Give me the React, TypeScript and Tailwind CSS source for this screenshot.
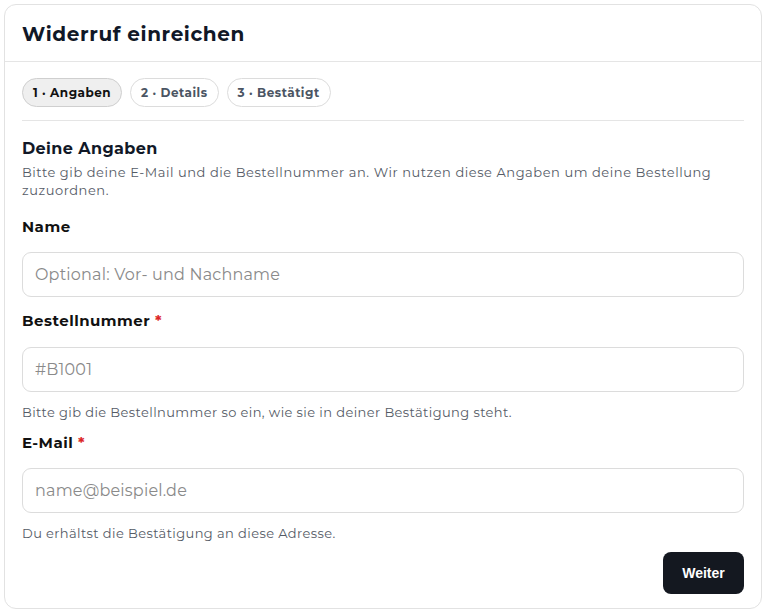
export default function App() {
  const font = { fontFamily: "Montserrat, 'Noto Sans', sans-serif" };
  const input = "w-full h-[45px] rounded-[9px] border border-[#dcdcdc] px-3 text-[16px] text-[#111] placeholder:text-[#8a8a8a] outline-none bg-white tracking-[0.2px]";
  return (
    <div className="w-[765px] h-[613px] bg-white p-[4px]" style={font}>
      <div className="h-[605px] w-[758px] rounded-[12px] border border-[#e2e2e2] flex flex-col">
        <div className="h-[57px] border-b border-[#e5e5e5] flex items-center px-[17px] pt-[2px]">
          <h1 className="text-[20px] font-bold text-[#111827] tracking-[0.6px]">Widerruf einreichen</h1>
        </div>
        <div className="px-[17px] flex flex-col">
          <div className="flex gap-[8px] pt-[16px] pb-[13px] border-b border-[#e5e5e5]">
            <span className="h-[29px] px-[10px] rounded-full border border-[#cfcfcf] bg-[#efefef] text-[12px] font-bold text-[#111] flex items-center tracking-[0.5px]">1 · Angaben</span>
            <span className="h-[29px] px-[10px] rounded-full border border-[#dcdcdc] text-[12px] font-bold text-[#4b5563] flex items-center tracking-[0.5px]">2 · Details</span>
            <span className="h-[29px] px-[10px] rounded-full border border-[#dcdcdc] text-[12px] font-bold text-[#4b5563] flex items-center tracking-[0.5px]">3 · Bestätigt</span>
          </div>
          <h2 className="mt-[17px] text-[16px] font-bold text-[#111827] leading-[22px] tracking-[0.4px]">Deine Angaben</h2>
          <p className="mt-[3px] text-[13px] leading-[18px] text-[#555b66] tracking-[0.55px]">Bitte gib deine E-Mail und die Bestellnummer an. Wir nutzen diese Angaben um deine Bestellung zuzuordnen.</p>
          <label className="mt-[18px] text-[15px] font-bold text-[#111] leading-[20px] tracking-[0.5px]">Name</label>
          <input className={input + " mt-[15px]"} placeholder="Optional: Vor- und Nachname" style={font} />
          <label className="mt-[14px] text-[15px] font-bold text-[#111] leading-[20px] tracking-[0.5px]">Bestellnummer <span className="text-[#dc2626]">*</span></label>
          <input className={input + " mt-[16px]"} placeholder="#B1001" style={font} />
          <p className="mt-[11px] text-[13px] leading-[18px] text-[#555b66] tracking-[0.4px]">Bitte gib die Bestellnummer so ein, wie sie in deiner Bestätigung steht.</p>
          <label className="mt-[12px] text-[15px] font-bold text-[#111] leading-[20px] tracking-[0.5px]">E-Mail <span className="text-[#dc2626]">*</span></label>
          <input className={input + " mt-[15px]"} placeholder="name@beispiel.de" style={font} />
          <p className="mt-[11px] text-[13px] leading-[18px] text-[#555b66] tracking-[0.4px]">Du erhältst die Bestätigung an diese Adresse.</p>
          <div className="flex justify-end mt-[10px]">
            <button className="h-[42px] w-[81px] rounded-[8px] bg-[#141820] text-white text-[14px] font-bold" style={{ fontFamily: "'Liberation Sans', Arial, sans-serif" }}>Weiter</button>
          </div>
        </div>
      </div>
    </div>
  );
}
